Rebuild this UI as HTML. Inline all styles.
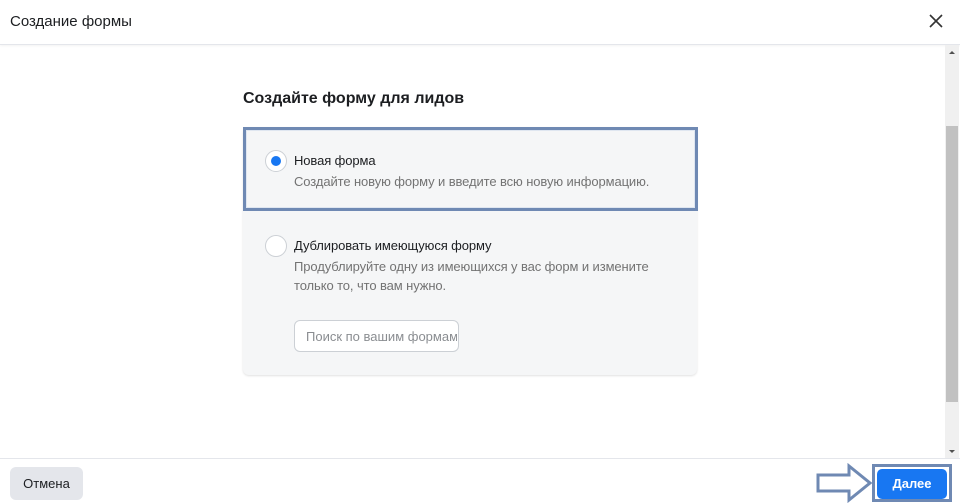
<!DOCTYPE html>
<html><head><meta charset="utf-8"><style>
*{box-sizing:border-box;margin:0;padding:0}
body{width:960px;height:504px;background:#fff;font-family:"Liberation Sans",Arial,sans-serif;position:relative;overflow:hidden;color:#1c1e21}
.hdr{position:absolute;left:0;top:0;width:960px;height:45px;border-bottom:1px solid #e4e6eb;box-shadow:0 1px 2px rgba(0,0,0,.05)}
.hdr .t{position:absolute;left:10px;top:13px;font-size:15px}
.x{position:absolute;left:929px;top:14px}
.sb{position:absolute;left:945px;top:45px;width:14px;height:413px;background:#f0f0f0}
.thumb{position:absolute;left:946px;top:126px;width:12px;height:276px;background:#c1c1c1}
h2{position:absolute;left:243px;top:90px;font-size:16px;font-weight:bold}
.card{position:absolute;left:243px;top:127px;width:454px;height:248px;background:#f5f6f7;border-radius:6px;box-shadow:0 1px 2px rgba(0,0,0,.12)}
.sel{position:absolute;left:243px;top:127px;width:455px;height:84px;border:3px solid #6f89b3;outline:1px solid #dfe6f0;outline-offset:-4px}
.radio{position:absolute;width:22px;height:22px;border-radius:50%;background:#fff;border:1px solid #ccd0d5}
.dot{position:absolute;left:5px;top:5px;width:10px;height:10px;border-radius:50%;background:#1877f2}
.l{position:absolute;font-size:13px;color:#1c1e21;letter-spacing:-0.1px}
.d{position:absolute;font-size:13px;color:#737373;line-height:19px;letter-spacing:-0.1px}
.inp{position:absolute;left:294px;top:320px;width:165px;height:32px;border:1px solid #ccd0d5;border-radius:6px;background:#fff;font-size:13px;color:#8a8d91;padding:8px 0 0 11px;white-space:nowrap;overflow:hidden}
.inp span{display:block;width:151px;overflow:hidden}
.ftr{position:absolute;left:0;top:458px;width:960px;height:46px;border-top:1px solid #e4e6eb}
.cancel{position:absolute;left:10px;top:467px;width:73px;height:33px;background:#e4e6eb;border-radius:6px;font-size:13px;text-align:center;line-height:33px}
.nb{position:absolute;left:872px;top:464px;width:80px;height:38px;border:3px solid #6f89b3}
.next{position:absolute;left:877px;top:469px;width:70px;height:30px;background:#1877f2;border-radius:5px;color:#fff;font-weight:bold;font-size:13px;text-align:center;line-height:30px}
</style></head><body>
<div class="hdr"><div class="t">Создание формы</div>
<svg class="x" width="14" height="14" viewBox="0 0 14 14"><path d="M1 1L13 13M13 1L1 13" stroke="#333" stroke-width="1.6"/></svg></div>
<div class="sb"></div><div class="thumb"></div>
<svg style="position:absolute;left:947px;top:49px" width="10" height="6"><path d="M2 5L5 2L8 5Z" fill="#505050"/></svg>
<svg style="position:absolute;left:947px;top:449px" width="10" height="6"><path d="M2 1L5 4L8 1Z" fill="#505050"/></svg>
<h2>Создайте форму для лидов</h2>
<div class="card"></div>
<div class="sel"></div>
<div class="radio" style="left:265px;top:150px"><div class="dot"></div></div>
<div class="l" style="left:294px;top:153px">Новая форма</div>
<div class="d" style="left:294px;top:172px">Создайте новую форму и введите всю новую информацию.</div>
<div class="radio" style="left:265px;top:235px"></div>
<div class="l" style="left:294px;top:238px">Дублировать имеющуюся форму</div>
<div class="d" style="left:294px;top:257px">Продублируйте одну из имеющихся у вас форм и измените<br>только то, что вам нужно.</div>
<div class="inp"><span>Поиск по вашим формам</span></div>
<div class="ftr"></div>
<div class="cancel">Отмена</div>
<svg style="position:absolute;left:815px;top:463px" width="58" height="40"><path d="M3 12H34V3L55 20L34 37V28H3Z" fill="#fff" stroke="#6f89b3" stroke-width="3" stroke-linejoin="miter"/></svg>
<div class="nb"></div>
<div class="next">Далее</div>
</body></html>
